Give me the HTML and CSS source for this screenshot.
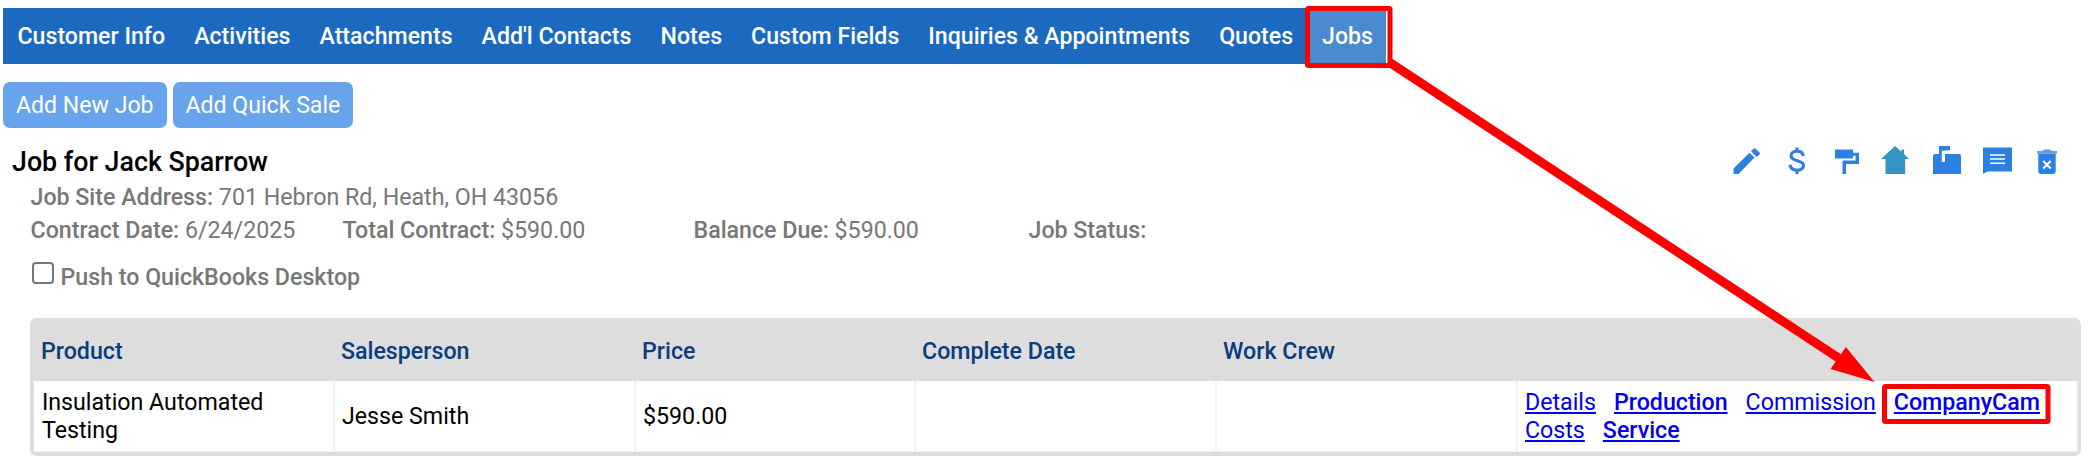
FILE: index.html
```html
<!DOCTYPE html>
<html lang="en">
<head>
    <meta charset="UTF-8">
    <title>Jobs</title>
    <link rel="stylesheet" href="styles.css">
</head>
<body>
    <div class="page">
        <nav class="tabs">
            <a class="tab">Customer Info</a>
            <a class="tab">Activities</a>
            <a class="tab">Attachments</a>
            <a class="tab">Add'l Contacts</a>
            <a class="tab">Notes</a>
            <a class="tab">Custom Fields</a>
            <a class="tab">Inquiries &amp; Appointments</a>
            <a class="tab">Quotes</a>
            <a class="tab active">Jobs</a>
        </nav>

        <div class="buttons">
            <button type="button">Add New Job</button>
            <button type="button">Add Quick Sale</button>
        </div>

        <div class="job-header">
            <h1>Job for Jack Sparrow</h1>
            <div class="icons">
                <!-- edit -->
                <svg width="28" height="28" viewBox="0 0 28 28"><path d="M0.500 28V22.500L16.500 6.800 21.500 11.500 5.500 28zM18 5.300l2.500-2.500q1-1 2 0l4 3.600q1 1 0 2L23.500 11z"/></svg>
                <!-- payments -->
                <svg width="18" height="28" viewBox="0 0 18 28"><path d="M9 1.500v4M9 24v4M15.300 10C14.800 6.800 12.500 5.200 9 5.200 5.400 5.200 3 7 3 9.800c0 6.400 12.500 3.600 12.500 9.600 0 3-2.800 4.700-6.500 4.700-4 0-6.500-1.900-7-5.300" fill="none" stroke="#2b80e2" stroke-width="3.200"/></svg>
                <!-- paint -->
                <svg width="24" height="28" viewBox="0 0 24 28"><path d="M0 3.500h18v3.300h6V18H11v10H7.500V14.500h13V9.700H18V12.500H0z"/></svg>
                <!-- home -->
                <svg class="home" width="28" height="28" viewBox="0 0 28 28"><path d="M14 0l6.500 5.800V3.600h2.500v4.500L28 13h-3.800v15H4.500V13H0z"/></svg>
                <!-- mailbox -->
                <svg width="28" height="28" viewBox="0 0 28 28"><path d="M6 0h11v4.500H12v3.500h14q2 0 2 2V28H0V10q0-2 2-2h4z"/><path d="M8.800 16V4.800H18V8h-6v8z" fill="#fff"/></svg>
                <!-- notes -->
                <svg width="29" height="28" viewBox="0 0 29 28"><path d="M0 1.500h29v24H4.500L0 28z"/><path d="M7 9h15M7 13h15M7 17.200h15" stroke="#fff" stroke-width="1.500"/></svg>
                <!-- delete -->
                <svg width="20" height="28" viewBox="0 0 20 28"><path d="M0 5h5.500l1.200-1.500h6.600L14.500 5H20v2.800H0z" opacity=".75"/><path d="M1.300 7.800h17.400V25q0 3-3 3H4.300q-3 0-3-3z"/><path d="M6.200 15l7.500 7.500M13.700 15l-7.500 7.500" stroke="#fff" stroke-width="2.200"/></svg>
            </div>
        </div>

        <div class="details">
            <div class="line"><b>Job Site Address:</b> 701 Hebron Rd, Heath, OH 43056</div>
            <div class="line summary">
                <span><b>Contract Date:</b> 6/24/2025</span>
                <span><b>Total Contract:</b> $590.00</span>
                <span><b>Balance Due:</b> $590.00</span>
                <span><b>Job Status:</b></span>
            </div>
            <label class="push"><input type="checkbox"><b>Push to QuickBooks Desktop</b></label>
        </div>

        <table class="products">
            <colgroup>
                <col class="col-product"><col class="col-sales"><col class="col-price">
                <col class="col-date"><col class="col-crew"><col>
            </colgroup>
            <thead>
                <tr>
                    <th>Product</th>
                    <th>Salesperson</th>
                    <th>Price</th>
                    <th>Complete Date</th>
                    <th>Work Crew</th>
                    <th></th>
                </tr>
            </thead>
            <tbody>
                <tr>
                    <td>Insulation Automated Testing</td>
                    <td>Jesse Smith</td>
                    <td>$590.00</td>
                    <td></td>
                    <td></td>
                    <td>
                        <div class="links">
                            <a href="#">Details</a>
                            <a href="#" class="strong">Production</a>
                            <a href="#">Commission</a>
                            <a href="#" class="strong">CompanyCam</a>
                        </div>
                        <div class="links">
                            <a href="#">Costs</a>
                            <a href="#" class="strong">Service</a>
                        </div>
                    </td>
                </tr>
            </tbody>
        </table>
    </div>

    <!-- Highlight boxes and arrow over the page -->
    <svg class="callout" width="2090" height="464" viewBox="0 0 2090 464">
        <rect x="1307.500" y="8.500" width="82.500" height="57" rx="1"/>
        <rect x="1884.500" y="386.500" width="163.500" height="35" rx="1"/>
        <path class="shaft" d="M1389 62L1840 359"/>
        <path class="head" d="M1874.500 382L1845.900 347 1830.500 369z"/>
    </svg>
</body>
</html>
```
FILE: styles.css
```css
* {
    box-sizing: border-box;
}

body {
    margin: 0;
    background: #ffffff;
    font-family: Roboto, "Liberation Sans", sans-serif;
    font-size: 23.200px;
    line-height: 28px;
    color: #000000;
}

b {
    font-weight: 500;
}

.page {
    padding: 8px 9px 0 3px;
}

.tabs {
    display: flex;
    width: max-content;
    height: 56px;
    background: #1c6ac0;
    font-size: 23.150px;
}

.tab {
    display: flex;
    align-items: center;
    padding: 2px 14.5px 0;
    color: #ffffff;
    font-weight: 500;
}

.tab.active {
    padding-right: 13px;
    background: #4a8acf;
}

.buttons {
    display: flex;
    gap: 6px;
    margin-top: 18px;
}

button {
    height: 46px;
    padding: 2px 13px 0;
    border: none;
    border-radius: 7px;
    background: #68a4eb;
    color: #ffffff;
    font: inherit;
    font-size: 23.100px;
}

.job-header {
    display: flex;
    justify-content: space-between;
    height: 51px;
    padding: 18px 9px 0 9px;
}

h1 {
    margin: 0;
    font-size: 26.800px;
    line-height: 33px;
    font-weight: 500;
}

.icons {
    display: grid;
    grid-template-columns: repeat(7, 50px);
    justify-items: center;
}

.icons svg {
    fill: #2b80e2;
}

.icons .home {
    margin-right: 5px;
    fill: #3394c5;
}

.details {
    padding: 4px 0 0 27.5px;
    color: #777777;
}

.line {
    height: 33px;
    line-height: 28px;
}

.summary {
    display: grid;
    grid-template-columns: 312px 351px 335px 1fr;
}

.push {
    display: flex;
    gap: 7px;
    height: 69px;
    padding-top: 14px;
}

.push input {
    appearance: none;
    width: 22px;
    height: 22px;
    margin: -1px 0 0 1px;
    border: 2px solid #777777;
    border-radius: 4px;
}

.products {
    width: 2051px;
    margin-left: 27px;
    border: 4px solid #dddddd;
    border-top: 0;
    border-right-width: 3px;
    border-radius: 7px;
    border-collapse: separate;
    border-spacing: 0;
    table-layout: fixed;
    background: #dddddd;
}

.col-product { width: 301px; }
.col-sales { width: 301px; }
.col-price { width: 280px; }
.col-date { width: 301px; }
.col-crew { width: 301px; }

th {
    height: 63px;
    padding: 2px 7px 0 6px;
    color: #083e7d;
    font-weight: 500;
    text-align: left;
}

th:first-child {
    padding-left: 7px;
}

td {
    height: 71px;
    padding: 0 7px;
    border-right: 2px solid #f3f3f3;
    border-bottom: 1px solid #f3f3f3;
    background: #ffffff;
}

td:first-child {
    padding-left: 8px;
}

.links {
    display: flex;
    gap: 18px;
}

.links a {
    color: #0000ee;
    text-decoration: underline;
}

.strong {
    font-weight: 500;
}

.callout {
    position: absolute;
    top: 0;
    left: 0;
    fill: none;
    stroke: #ff0000;
    stroke-width: 5;
}

.callout .shaft {
    stroke-width: 9;
}

.callout .head {
    fill: #ff0000;
    stroke: none;
}
```
